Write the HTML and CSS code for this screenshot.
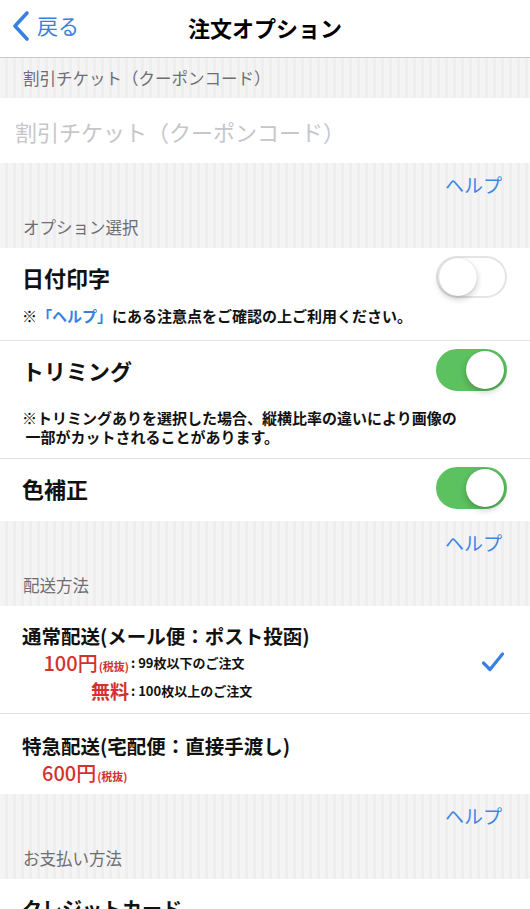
FILE: index.html
```html
<!DOCTYPE html>
<html lang="ja">
<head>
    <meta charset="UTF-8">
    <meta name="viewport" content="width=device-width, initial-scale=1.0">
    <title>注文オプション</title>
    <link rel="stylesheet" href="styles.css">
</head>
<body>
    <header class="navbar">
        <a class="back" href="#">
            <svg width="20" height="30" viewBox="0 0 20 30"><path d="M16 2 L4 15 L16 28" fill="none" stroke="currentColor" stroke-width="3.6" stroke-linecap="round" stroke-linejoin="round"/></svg>
            <span>戻る</span>
        </a>
        <h1>注文オプション</h1>
    </header>

    <div class="group-header first">割引チケット（クーポンコード）</div>
    <div class="input-row">
        <input type="text" placeholder="割引チケット（クーポンコード）">
    </div>
    <div class="group-footer"><a class="help" href="#">ヘルプ</a></div>

    <div class="group-header">オプション選択</div>
    <section class="cells">
        <div class="cell">
            <div class="cell-main">
                <span class="cell-title">日付印字</span>
                <span class="switch"></span>
            </div>
            <p class="note">※<span class="link">「ヘルプ」</span>にある注意点をご確認の上ご利用ください。</p>
        </div>
        <div class="cell">
            <div class="cell-main">
                <span class="cell-title">トリミング</span>
                <span class="switch on"></span>
            </div>
            <p class="note long">※トリミングありを選択した場合、縦横比率の違いにより画像の<br>&nbsp;一部がカットされることがあります。</p>
        </div>
        <div class="cell last">
            <div class="cell-main">
                <span class="cell-title">色補正</span>
                <span class="switch on"></span>
            </div>
        </div>
    </section>
    <div class="group-footer"><a class="help" href="#">ヘルプ</a></div>

    <div class="group-header">配送方法</div>
    <section class="cells">
        <div class="ship">
            <div class="ship-info">
                <div class="ship-title">通常配送(メール便：ポスト投函)</div>
                <div class="price-list">
                    <span class="price">100円<small>(税抜)</small></span>
                    <span class="cond">: 99枚以下のご注文</span>
                    <span class="price free">無料</span>
                    <span class="cond">: 100枚以上のご注文</span>
                </div>
            </div>
            <svg class="check" width="24" height="22" viewBox="0 0 24 22"><path d="M2.5 12 L9 18.5 L21.5 3" fill="none" stroke="currentColor" stroke-width="3.2" stroke-linecap="round" stroke-linejoin="round"/></svg>
        </div>
        <div class="ship express">
            <div class="ship-info">
                <div class="ship-title">特急配送(宅配便：直接手渡し)</div>
                <div class="price single">600円<small>(税抜)</small></div>
            </div>
        </div>
    </section>
    <div class="group-footer"><a class="help" href="#">ヘルプ</a></div>

    <div class="group-header">お支払い方法</div>
    <section class="cells">
        <div class="pay">クレジットカード</div>
    </section>
</body>
</html>
```

FILE: styles.css
```css
body {
    margin: 0;
    font-family: "Noto Sans CJK JP", "Noto Sans", sans-serif;
    color: #111;
    background: repeating-linear-gradient(90deg, #f4f4f5 0 5px, #eeeeef 5px 8px);
}
a {
    text-decoration: none;
}
.navbar {
    height: 58px;
    box-sizing: border-box;
    padding-bottom: 4px;
    background-color: #fff;
    border-bottom: 1px solid #c9c9cc;
    display: flex;
    align-items: center;
    justify-content: center;
    position: relative;
}
.navbar h1 {
    margin: 0;
    font-size: 22px;
    font-weight: 700;
    color: #000;
}
.back {
    position: absolute;
    left: 11px;
    top: 11px;
    display: flex;
    align-items: center;
    gap: 6px;
    color: #3a80e3;
    font-size: 21px;
}
.back span {
    line-height: 30px;
    margin-top: -2px;
}
.group-header {
    height: 43px;
    display: flex;
    align-items: center;
    padding-left: 23px;
    font-size: 16.5px;
    color: #6d6d72;
}
.group-header.first {
    height: 40px;
}
.group-footer {
    height: 42px;
    display: flex;
    align-items: center;
    justify-content: flex-end;
    padding-right: 28px;
}
.help {
    font-size: 19px;
    color: #3f86e4;
}
.input-row {
    background-color: #fff;
    height: 65px;
}
.input-row input {
    width: 100%;
    height: 65px;
    box-sizing: border-box;
    border: none;
    outline: none;
    padding: 0 15px;
    font-family: inherit;
    font-size: 22px;
    background: transparent;
}
.input-row input::placeholder {
    color: #c6c6cb;
}
.cells {
    background-color: #fff;
}
.cell {
    padding: 8px 23px 0 22px;
    border-bottom: 1px solid #e2e2e4;
}
.cell.last {
    border-bottom: none;
    padding-bottom: 12px;
}
.cell-main {
    height: 42px;
    display: flex;
    align-items: center;
    justify-content: space-between;
}
.cell-title {
    font-size: 22px;
    font-weight: 700;
}
.switch {
    width: 71px;
    height: 42px;
    box-sizing: border-box;
    border-radius: 21px;
    border: 2px solid #e4e4e6;
    background-color: #fff;
    display: flex;
    align-items: center;
    padding: 0 1px;
}
.switch::after {
    content: "";
    width: 38px;
    height: 38px;
    border-radius: 50%;
    background-color: #fff;
    box-shadow: 0 3px 6px rgba(0, 0, 0, 0.22), 0 0 1px rgba(0, 0, 0, 0.2);
}
.switch.on {
    background-color: #5cc15f;
    border-color: #5cc15f;
    justify-content: flex-end;
}
.note {
    margin: 8px 0 0;
    padding-bottom: 14px;
    font-size: 15px;
    font-weight: 700;
    line-height: 20px;
}
.note.long {
    margin-top: 17px;
    line-height: 19px;
    padding-bottom: 12px;
}
.link {
    color: #3a80e3;
}
.ship {
    display: flex;
    align-items: center;
    justify-content: space-between;
    padding: 16px 25px 8px 22px;
    border-bottom: 1px solid #e2e2e4;
}
.ship.express {
    padding-top: 18px;
    padding-bottom: 7px;
    border-bottom: none;
}
.ship-title {
    font-size: 19.5px;
    font-weight: 700;
    line-height: 27px;
}
.price-list {
    display: grid;
    grid-template-columns: 107px auto;
    align-items: center;
}
.price, .cond {
    line-height: 28px;
}
.price {
    text-align: right;
    color: #d2322e;
    font-size: 20px;
    font-weight: 500;
}
.price small {
    font-size: 11px;
    font-weight: 700;
    line-height: 1;
    margin-left: 1px;
}
.price.free {
    font-weight: 700;
    font-size: 19px;
}
.price.single {
    text-align: left;
    padding-left: 20px;
}
.cond {
    font-size: 13px;
    font-weight: 700;
    padding-left: 2px;
}
.check {
    color: #3a7fe2;
    margin-top: -4px;
}
.pay {
    padding: 18px 22px 15px;
    font-size: 20px;
    font-weight: 700;
    line-height: 24px;
    border-bottom: 1px solid #e2e2e4;
}
```
